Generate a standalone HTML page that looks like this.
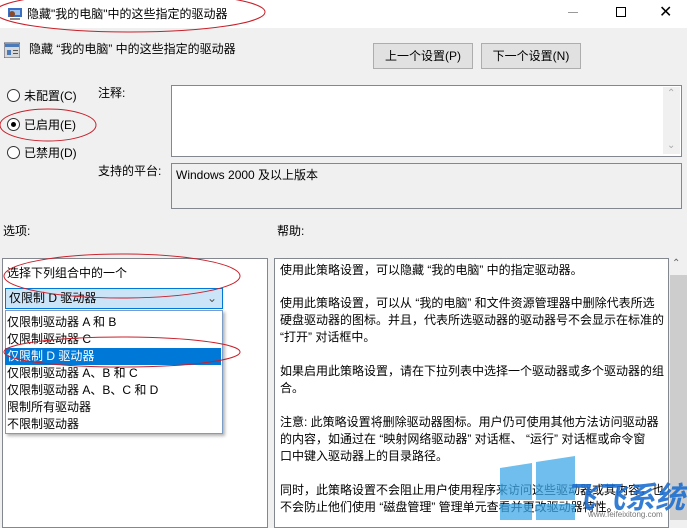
<!DOCTYPE html>
<html><head><meta charset="utf-8"><style>
*{margin:0;padding:0;box-sizing:border-box}
body{width:687px;height:520px;overflow:hidden;background:#f0f0f0;font-family:"Liberation Sans","Noto Sans CJK SC",sans-serif;font-size:12px;color:#000;position:relative}
.a{position:absolute;white-space:nowrap}
.btn{position:absolute;background:#e1e1e1;border:1px solid #adadad;text-align:center;line-height:24px}
.box{position:absolute;border:1px solid #828790;background:#fff}
.radio{position:absolute;width:13px;height:13px;border:1px solid #333;border-radius:50%;background:#fff}
.help div{position:absolute;left:5px;white-space:nowrap}
.opt{position:absolute;left:5px;width:216px;height:17px;line-height:17px;padding-left:2px}
</style></head><body>
<div class="a" style="left:0;top:0;width:687px;height:28px;background:#fff"></div>
<svg class="a" style="left:7px;top:6px" width="16" height="16"><rect x="1" y="2" width="14" height="9" fill="#3a6fc4"/><rect x="3" y="4" width="10" height="5" fill="#9cc4ee"/><circle cx="5" cy="8" r="3" fill="#8a4a2a"/><rect x="3" y="12" width="10" height="2" fill="#888"/></svg>
<div class="a" style="left:27px;top:5px;font-size:12px">隐藏"我的电脑"中的这些指定的驱动器</div>
<div class="a" style="left:568px;top:12px;width:10px;height:1px;background:#999"></div>
<div class="a" style="left:616px;top:7px;width:10px;height:10px;border:1px solid #000"></div>
<div class="a" style="left:659px;top:2px;font-size:16px">✕</div>
<svg class="a" style="left:4px;top:42px" width="16" height="16"><rect x="0" y="1" width="16" height="15" fill="#d8d8d8" stroke="#556" /><rect x="1" y="2" width="14" height="3" fill="#4a7ab8"/><rect x="3" y="8" width="4" height="5" fill="#4a7ab8"/><rect x="9" y="8" width="5" height="1" fill="#555"/><rect x="9" y="11" width="5" height="1" fill="#555"/></svg>
<div class="a" style="left:29px;top:40px">隐藏 “我的电脑” 中的这些指定的驱动器</div>
<div class="btn" style="left:373px;top:43px;width:100px;height:26px">上一个设置(P)</div>
<div class="btn" style="left:481px;top:43px;width:100px;height:26px">下一个设置(N)</div>
<div class="radio" style="left:7px;top:89px"></div><div class="a" style="left:24px;top:87px">未配置(C)</div>
<div class="radio" style="left:7px;top:118px"></div><div class="a" style="left:11px;top:122px;width:5px;height:5px;border-radius:50%;background:#000"></div><div class="a" style="left:24px;top:116px">已启用(E)</div>
<div class="radio" style="left:7px;top:146px"></div><div class="a" style="left:24px;top:144px">已禁用(D)</div>
<div class="a" style="left:98px;top:84px">注释:</div>
<div class="box" style="left:171px;top:85px;width:511px;height:72px"></div>
<div class="a" style="left:663px;top:87px;width:17px;height:67px;background:#f0f0f0"></div>
<div class="a" style="left:667px;top:88px;color:#aaa;font-size:10px">⌃</div>
<div class="a" style="left:667px;top:140px;color:#aaa;font-size:10px">⌄</div>
<div class="a" style="left:98px;top:162px">支持的平台:</div>
<div class="a" style="left:171px;top:163px;width:511px;height:46px;border:1px solid #828790;background:#f0f0f0"></div>
<div class="a" style="left:176px;top:166px">Windows 2000 及以上版本</div>
<div class="a" style="left:3px;top:222px">选项:</div>
<div class="a" style="left:277px;top:222px">帮助:</div>
<div class="box" style="left:2px;top:258px;width:266px;height:270px"></div>
<div class="a" style="left:7px;top:264px">选择下列组合中的一个</div>
<div class="a" style="left:5px;top:288px;width:218px;height:21px;background:#cce4f7;border:1px solid #0078d7;line-height:19px;padding-left:3px">仅限制 D 驱动器<span style="position:absolute;right:5px;top:0;color:#555">⌄</span></div>
<div class="a" style="left:5px;top:310px;width:218px;height:124px;background:#fff;border:1px solid #7a9cc6;box-shadow:2px 2px 3px rgba(0,0,0,.3)"></div>
<div class="opt" style="top:314px">仅限制驱动器 A 和 B</div>
<div class="opt" style="top:331px">仅限制驱动器 C</div>
<div class="opt" style="top:348px;background:#0078d7;color:#fff">仅限制 D 驱动器</div>
<div class="opt" style="top:365px">仅限制驱动器 A、B 和 C</div>
<div class="opt" style="top:382px">仅限制驱动器 A、B、C 和 D</div>
<div class="opt" style="top:399px">限制所有驱动器</div>
<div class="opt" style="top:416px">不限制驱动器</div>
<div class="box help" style="left:274px;top:258px;width:395px;height:270px">
<div style="top:2px">使用此策略设置，可以隐藏 “我的电脑” 中的指定驱动器。</div>
<div style="top:35px">使用此策略设置，可以从 “我的电脑” 和文件资源管理器中删除代表所选</div>
<div style="top:52px">硬盘驱动器的图标。并且，代表所选驱动器的驱动器号不会显示在标准的</div>
<div style="top:69px">“打开” 对话框中。</div>
<div style="top:103px">如果启用此策略设置，请在下拉列表中选择一个驱动器或多个驱动器的组</div>
<div style="top:120px">合。</div>
<div style="top:154px">注意: 此策略设置将删除驱动器图标。用户仍可使用其他方法访问驱动器</div>
<div style="top:171px">的内容，如通过在 “映射网络驱动器” 对话框、 “运行” 对话框或命令窗</div>
<div style="top:188px">口中键入驱动器上的目录路径。</div>
<div style="top:222px">同时，此策略设置不会阻止用户使用程序来访问这些驱动器或其内容，也</div>
<div style="top:239px">不会防止他们使用 “磁盘管理” 管理单元查看并更改驱动器特性。</div>
</div>
<div class="a" style="left:669px;top:258px;width:18px;height:262px;background:#f0f0f0"></div>
<div class="a" style="left:672px;top:258px;color:#666;font-size:10px">⌃</div>
<div class="a" style="left:670px;top:275px;width:17px;height:245px;background:#cdcdcd"></div>
<svg class="a" style="left:0;top:0" width="687" height="520">
<g fill="none" stroke="#c8202a" stroke-width="1">
<ellipse cx="130" cy="12" rx="135" ry="20"/>
<ellipse cx="48" cy="125" rx="48" ry="16"/>
<ellipse cx="122" cy="276" rx="118" ry="22"/>
<ellipse cx="122" cy="352" rx="118" ry="15"/>
</g>
<g fill="#3fa9e8" opacity="0.75">
<polygon points="500,468 532,463 532,500 500,500"/>
<polygon points="536,462 575,456 575,500 536,500"/>
<polygon points="500,504 532,504 532,520 500,520"/>
<polygon points="536,504 575,504 575,520 536,520"/>
</g>
<text x="565" y="508" font-family="Noto Sans CJK SC,sans-serif" font-size="30" font-weight="bold" font-style="italic" fill="#1e6fd0" opacity="0.9">飞飞系统</text>
<text x="588" y="517" font-family="Liberation Sans,sans-serif" font-size="8" fill="#777">www.feifeixitong.com</text>
</svg>
</body></html>
